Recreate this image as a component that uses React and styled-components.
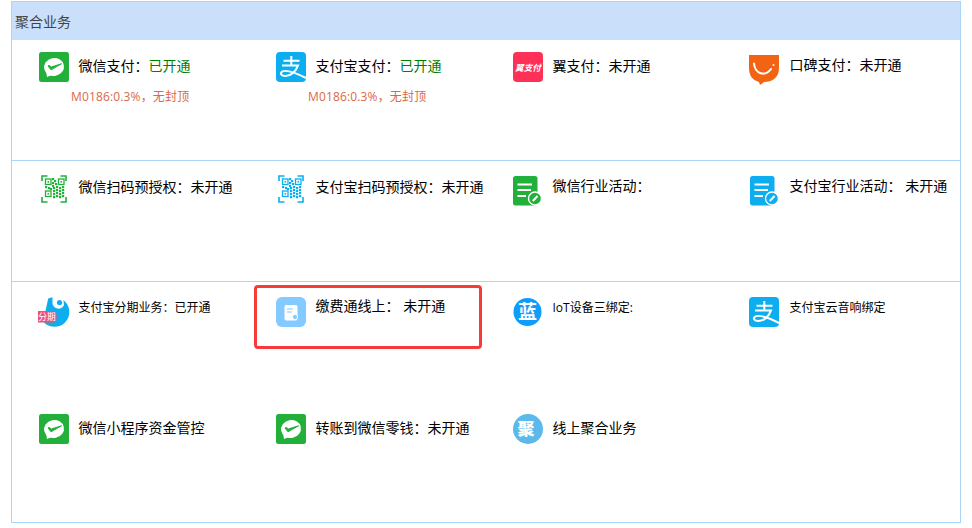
import React from 'react';
import styled, { createGlobalStyle } from 'styled-components';

const Global = createGlobalStyle`
  html, body { margin: 0; padding: 0; background: #fff; }
  body { font-family: "Open Sans", "Noto Sans CJK SC", "Liberation Sans", sans-serif; color: #000; }
`;
const Page = styled.div`width: 972px; height: 528px; padding: 1px 11px 0; box-sizing: border-box; overflow: hidden;`;
const Panel = styled.section`width: 950px; height: 522px; box-sizing: border-box; border: 1px solid #a9d5f8;`;
const Header = styled.header`height: 38px; line-height: 39px; padding-left: 3px; background: #c9dffa; color: #444; font-size: 14px;`;
const Row = styled.div`
  display: grid; grid-template-columns: repeat(4, 237px); height: ${p => p.$height || 120}px; box-sizing: border-box;
  padding-top: ${p => p.$top}px; border-bottom: ${p => (p.$line ? '1px solid #a9d5f8' : '0')};
`;
const Cell = styled.div`position: relative; padding-left: 27px;`;
const Main = styled.div`display: flex; align-items: flex-start; height: 30px;`;
const IconBox = styled.span`
  flex: 0 0 30px; width: 30px; height: 30px; display: block; margin-left: ${p => p.$shift || 0}px;
  margin-right: ${p => 9.5 - (p.$shift || 0)}px; margin-top: ${p => p.$drop || 0}px;
  svg { display: block; width: 30px; height: 30px; overflow: visible; }
`;
const Label = styled.span`
  font-size: ${p => p.$small ? 12 : 14}px; line-height: 20px; white-space: pre; margin-top: ${p => p.$up ?? 4}px;
`;
const Open = styled.span`color: #008000;`;
const Sub = styled.div`margin: 5px 0 0 32px; font-size: 12px; line-height: 20px; letter-spacing: .15px; color: #d9694a; white-space: nowrap;`;
const Highlight = styled.div`
  position: absolute; left: 5px; top: -12px; width: 228px; height: 64px; box-sizing: border-box;
  border: 3px solid #f73b3b; border-radius: 4px; pointer-events: none;
`;

const cjk = '"Noto Sans CJK SC", sans-serif';

const Wechat = () => (
  <svg viewBox="0 0 30 30">
    <rect width="30" height="30" rx="2.5" fill="#22b03a" />
    <ellipse cx="15" cy="15" rx="10" ry="9" fill="#fff" transform="rotate(-12 15 15)" />
    <path d="M7 19 L8 25 L14 22.5 Z" fill="#fff" />
    <path d="M9 14 L12 17.8 L22.5 11.8 L12.3 15 L10.2 13.4 Z" fill="#22b03a" stroke="#22b03a" strokeWidth="1" strokeLinejoin="round" />
  </svg>
);
const Alipay = () => (
  <svg viewBox="0 0 30 30">
    <rect width="30" height="30" rx="4" fill="#0caeef" />
    <path d="M7.5 8.8 H23.5 M15.3 4 V13 M6 13.4 H22 C20 19.5 15 24 9.5 24 C5 24 3.8 21.5 6 19.8 C9.5 17.2 17 19.5 30 26" fill="none" stroke="#fff" strokeWidth="2" />
  </svg>
);
const Yi = () => (
  <svg viewBox="0 0 30 30">
    <rect width="30" height="30" rx="4" fill="#ff3057" />
    <text x="15" y="18.5" textAnchor="middle" fontSize="8.6" fontStyle="italic" fontWeight="700" fontFamily={cjk} fill="#fff">翼支付</text>
  </svg>
);
const Koubei = () => (
  <svg viewBox="0 0 30 30">
    <path d="M0 0 H30 V13 C30 23 23 27 15 27 L11 30 L10 27 C3 25 0 20 0 13 Z" fill="#f26414" />
    <path d="M5 8.5 C6 19 16 22 22 14" fill="none" stroke="#fff" strokeWidth="2" strokeLinecap="round" />
    <circle cx="24.5" cy="10" r="1" fill="#fff" />
  </svg>
);
const Finder = ({ x, y, color }) => (
  <>
    <rect x={x} y={y} width="5.5" height="5.5" fill="none" stroke={color} strokeWidth="1.3" />
    <rect x={x + 2} y={y + 2} width="1.6" height="1.6" fill={color} />
  </>
);
const Qr = ({ color }) => {
  const dots = [[13,3],[15,5],[13,7],[16,8],[13,10],[6,11],[9,12],[11,13],[14,12],[17,11],[20,12],[23,11],[14,15],[17,14],[20,15],[23,14],[14,18],[17,17],[20,18],[23,17],[14,21],[17,20],[20,21],[23,20]];
  return (
    <svg viewBox="0 0 30 30">
      <path d="M3 6 V1 H8.5 M21.5 1 H27 V6 M27 22 V27 H21.5 M8.5 27 H3 V22" fill="none" stroke={color} strokeWidth="1.6" />
      <Finder x={6.5} y={4} color={color} />
      <Finder x={19.5} y={4} color={color} />
      <Finder x={6.5} y={16} color={color} />
      <g fill={color}>
        {dots.map(([x, y]) => <rect key={`${x}-${y}`} x={x} y={y} width="2.2" height="2.2" />)}
      </g>
    </svg>
  );
};
const Doc = ({ color }) => (
  <svg viewBox="0 0 30 30">
    <rect x="0" y="0" width="24.5" height="29.5" rx="2.5" fill={color} />
    <path d="M4.5 8.5 H19 M4.5 14 H18 M4.5 20 H13" stroke="#fff" strokeWidth="2" />
    <circle cx="22" cy="22.5" r="6.5" fill={color} stroke="#fff" strokeWidth="1.4" />
    <path d="M19.8 25 L24.5 20" stroke="#fff" strokeWidth="2" />
  </svg>
);
const Fenqi = () => (
  <svg viewBox="0 0 30 30">
    <circle cx="15.5" cy="15" r="14.8" fill="#0caeef" />
    <path d="M0 0 H9.5 L6.5 14 H0 Z" fill="#fff" />
    <path d="M13.5 0 V7 C15 12 22 14 25 8 L24 0 Z" fill="#fff" />
    <circle cx="20.5" cy="5.5" r="2.6" fill="#0caeef" />
    <path d="M-1 14 H15 C18.5 14 18.5 25.5 15 25.5 H-1 Z" fill="#ec5279" />
    <text x="8" y="23" textAnchor="middle" fontSize="8.8" fontFamily={cjk} fill="#fff">分期</text>
  </svg>
);
const Bill = () => (
  <svg viewBox="0 0 30 30">
    <rect width="30" height="30" rx="6" fill="#82caff" />
    <rect x="8.5" y="8" width="13" height="15.5" rx="1.8" fill="#fff" />
    <path d="M11 12 H17 M11 15 H16" stroke="#82caff" strokeWidth="1.1" />
    <circle cx="19" cy="20" r="2.6" fill="#82caff" stroke="#fff" strokeWidth="1" />
  </svg>
);
const Lan = () => (
  <svg viewBox="0 0 30 30">
    <circle cx="14.5" cy="15" r="14" fill="#0e9dfb" />
    <text x="14.5" y="22" textAnchor="middle" fontSize="19" fontWeight="700" fontFamily={cjk} fill="#fff">蓝</text>
  </svg>
);
const Ju = () => (
  <svg viewBox="0 0 30 30">
    <ellipse cx="15" cy="15" rx="15" ry="15" fill="#5bb9ec" />
    <text x="13" y="21" textAnchor="middle" fontSize="17" fontWeight="900" fontFamily={cjk} fill="#fff">聚</text>
  </svg>
);

const Item = ({ icon, shift, drop, small, up, sub, status, text, highlight }) => (
  <Cell>
    <Main>
      <IconBox $shift={shift} $drop={drop}>{icon}</IconBox>
      <Label $small={small} $up={up}>{text}{status && <Open>{status}</Open>}</Label>
    </Main>
    {sub && <Sub>{sub}</Sub>}
    {highlight && <Highlight />}
  </Cell>
);

export default function App() {
  return (
    <Page>
      <Global />
      <Panel>
        <Header>聚合业务</Header>
        <Row $top={12} $height={121} $line>
          <Item icon={<Wechat />} text="微信支付：" status="已开通" sub="M0186:0.3%，无封顶" />
          <Item icon={<Alipay />} text="支付宝支付：" status="已开通" sub="M0186:0.3%，无封顶" />
          <Item icon={<Yi />} text="翼支付：未开通" />
          <Item icon={<Koubei />} shift={-1} drop={3} up={3} text="口碑支付：未开通" />
        </Row>
        <Row $top={15} $height={121} $line>
          <Item icon={<Qr color="#22b03a" />} drop={-1} up={1} text="微信扫码预授权：未开通" />
          <Item icon={<Qr color="#0caeef" />} drop={-1} up={1} text="支付宝扫码预授权：未开通" />
          <Item icon={<Doc color="#22b03a" />} up={0} text="微信行业活动：" />
          <Item icon={<Doc color="#0caeef" />} up={0} text="支付宝行业活动： 未开通" />
        </Row>
        <Row $top={15}>
          <Item icon={<Fenqi />} small up={1} text="支付宝分期业务：已开通" />
          <Item icon={<Bill />} up={-1} text="缴费通线上： 未开通" highlight />
          <Item icon={<Lan />} small up={1} text="IoT设备三绑定:" />
          <Item icon={<Alipay />} shift={-1} small up={1} text="支付宝云音响绑定" />
        </Row>
        <Row $top={12} $height={120}>
          <Item icon={<Wechat />} text="微信小程序资金管控" />
          <Item icon={<Wechat />} text="转账到微信零钱：未开通" />
          <Item icon={<Ju />} text="线上聚合业务" />
        </Row>
      </Panel>
    </Page>
  );
}
